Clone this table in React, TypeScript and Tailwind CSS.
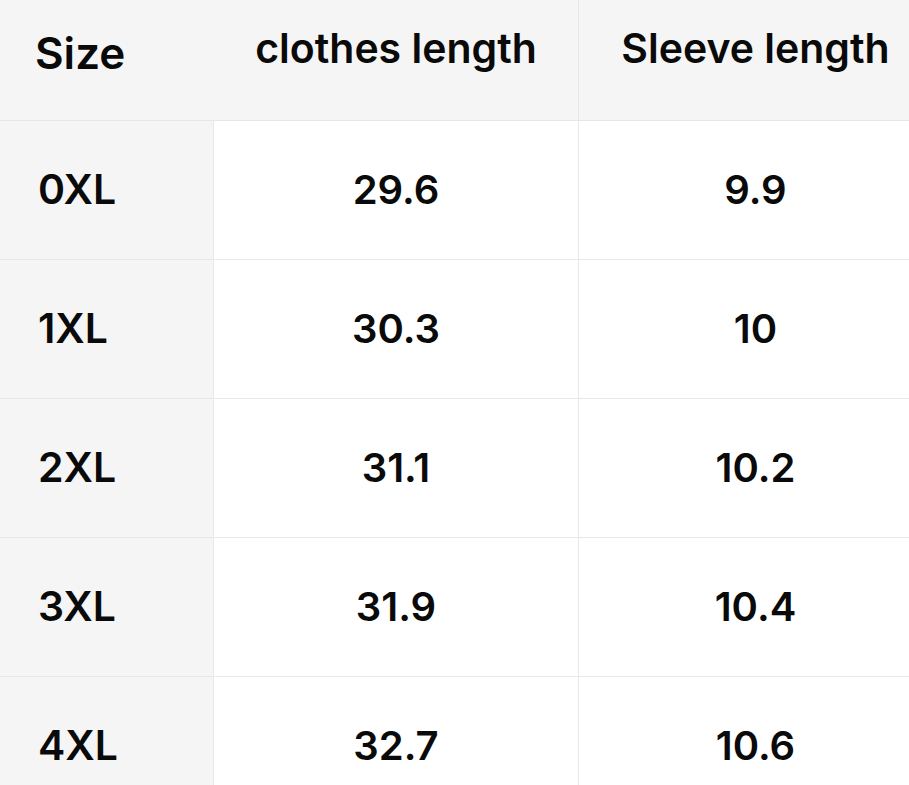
import React from 'react';

const rows = [
  { size: '0XL', length: '29.6', sleeve: '9.9' },
  { size: '1XL', length: '30.3', sleeve: '10' },
  { size: '2XL', length: '31.1', sleeve: '10.2' },
  { size: '3XL', length: '31.9', sleeve: '10.4' },
  { size: '4XL', length: '32.7', sleeve: '10.6' },
];

export default function App() {
  return (
    <div className="w-[909px] h-[785px] overflow-hidden bg-white text-[#0a0a0a] font-['Inter','Liberation_Sans',sans-serif] font-semibold">
      <div className="grid grid-cols-[214px_365px_353px] w-[932px]">
        {/* Header */}
        <div className="h-[121px] bg-[#f5f5f5] border-b border-[#e6e6e6] flex items-center pl-[35px] pb-[14px] text-[44px]">
          Size
        </div>
        <div className="h-[121px] bg-[#f5f5f5] border-b border-r border-[#e6e6e6] flex items-center justify-center pb-[22px] text-[41px]">
          clothes length
        </div>
        <div className="h-[121px] bg-[#f5f5f5] border-b border-[#e6e6e6] flex items-center justify-center pb-[22px] text-[41px]">
          Sleeve length
        </div>

        {/* Rows */}
        {rows.map((r) => (
          <React.Fragment key={r.size}>
            <div className="h-[139px] bg-[#f5f5f5] border-b border-r border-[#e8e8e8] flex items-center pl-[38px] text-[41px]">
              {r.size}
            </div>
            <div className="h-[139px] border-b border-r border-[#e8e8e8] flex items-center justify-center text-[40px]">
              {r.length}
            </div>
            <div className="h-[139px] border-b border-[#e8e8e8] flex items-center justify-center text-[40px]">
              {r.sleeve}
            </div>
          </React.Fragment>
        ))}
      </div>
    </div>
  );
}
